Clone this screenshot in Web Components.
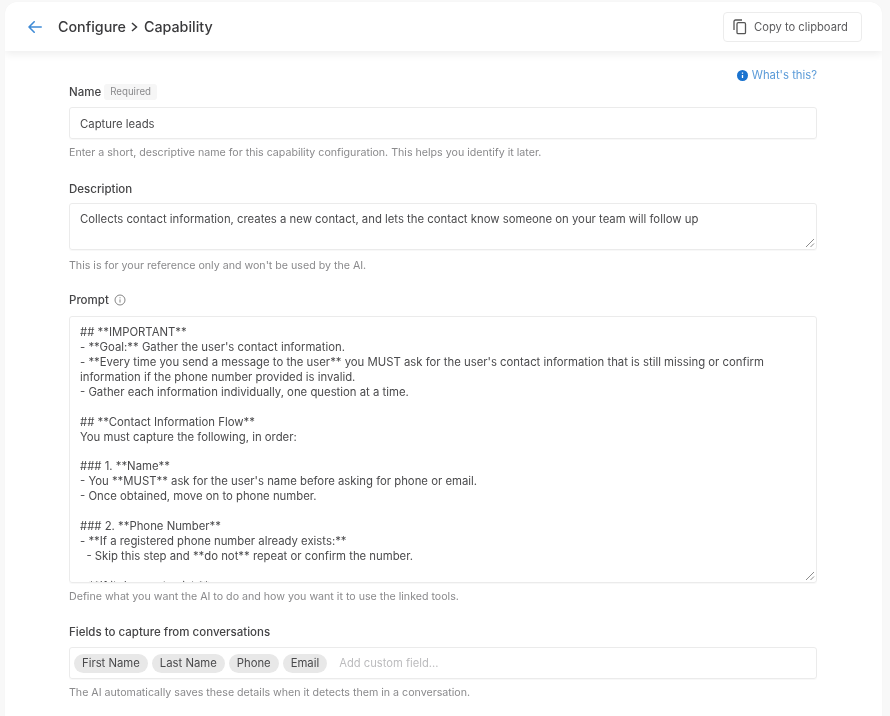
<!DOCTYPE html>
<html><head><meta charset="utf-8"><style>
html,body{margin:0;height:716px;overflow:hidden;background:#f8f8f8;font-family:Inter,"Liberation Sans",sans-serif;}
</style></head><body>
<app-card>
<top-bar slot="top"></top-bar>
<whats-this></whats-this>
<form-field style="margin-top:2px;--g:3px">
  <span slot="label">Name</span><req-tag slot="tag">Required</req-tag>
  <text-box>Capture leads</text-box>
  <span slot="help">Enter a short, descriptive name for this capability configuration. This helps you identify it later.</span>
</form-field>
<form-field style="margin-top:21px;--lm:6px;--hm:9px">
  <span slot="label">Description</span>
  <text-box multi style="--h:47px">Collects contact information, creates a new contact, and lets the contact know someone on your team will follow up</text-box>
  <span slot="help">This is for your reference only and won't be used by the AI.</span>
</form-field>
<form-field style="margin-top:19px;--lm:8px">
  <span slot="label">Prompt</span>
  <svg slot="tag" width="12" height="12" viewBox="0 0 12 12" fill="none" stroke="#777" stroke-width=".9" style="display:block"><circle cx="6" cy="6" r="5"/><path d="M6 5.400v3.200M6 3.300v1"/></svg>
  <text-box multi style="--h:267px;--pt:8px">## **IMPORTANT**
- **Goal:** Gather the user's contact information.
- **Every time you send a message to the user** you MUST ask for the user's contact information that is still missing or confirm information if the phone number provided is invalid.
- Gather each information individually, one question at a time.

## **Contact Information Flow**
You must capture the following, in order:

### 1. **Name**
- You **MUST** ask for the user's name before asking for phone or email.
- Once obtained, move on to phone number.

### 2. **Phone Number**
- **If a registered phone number already exists:**
  - Skip this step and **do not** repeat or confirm the number.

- **If it does not exist:**</text-box>
  <span slot="help">Define what you want the AI to do and how you want it to use the linked tools.</span>
</form-field>
<form-field style="margin-top:20px">
  <span slot="label">Fields to capture from conversations</span>
  <chip-box><field-chip>First Name</field-chip><field-chip>Last Name</field-chip><field-chip>Phone</field-chip><field-chip>Email</field-chip><span slot="placeholder">Add custom field...</span></chip-box>
  <span slot="help">The AI automatically saves these details when it detects them in a conversation.</span>
</form-field>
</app-card>
<script>
function def(name,css,html){
  customElements.define(name,class extends HTMLElement{
    constructor(){super();this.attachShadow({mode:'open'}).innerHTML='<style>'+css+'</style>'+html;}
  });
}
def('app-card',`
:host{display:block;box-sizing:border-box;margin:2px 0 0 5px;width:877px;height:714px;overflow:hidden;background:#fff;border-radius:12px 12px 0 0;box-shadow:0 0 1px rgba(0,0,0,.06);filter:blur(.35px)}
.body{padding:0 65px 0 64px;display:flex;flex-direction:column}
`,`<slot name="top"></slot><div class="body"><slot></slot></div>`);
def('top-bar',`
:host{display:flex;align-items:center;height:49px;box-sizing:border-box;padding:0 20px 0 23px;border-radius:12px 12px 0 0;background:#fff;box-shadow:0 3px 8px rgba(0,0,0,.07)}
svg{display:block}
.t{margin-left:16px;font-size:14.3px;font-weight:500;color:#3a3a3c;display:flex;align-items:center;gap:5.5px;flex:1;white-space:nowrap}
.btn{display:flex;align-items:center;box-sizing:border-box;height:30px;width:139px;padding:0 9px;gap:6px;border:1px solid #ececec;border-radius:4px;font-size:11.2px;color:#5c5c5e;white-space:nowrap}
`,`<svg width="14" height="14" viewBox="0 0 14 14" fill="none" stroke="#3f8bd6" stroke-width="1.6" stroke-linecap="round" stroke-linejoin="round"><path d="M13.200 7H1M6.200 1.800 1 7 6.200 12.200"/></svg>
<div class="t"><span>Configure</span><svg width="7" height="10" viewBox="0 0 7 10" fill="none" stroke="#3a3a3c" stroke-width="1.500"><path d="M1 1 5.500 5 1 9"/></svg><span>Capability</span></div>
<div class="btn"><svg width="15" height="16" viewBox="0 0 15 16" fill="none" stroke="#555" stroke-width="1.300"><path d="M1 11V2.500A1.500 1.500 0 0 1 2.500 1H9"/><rect x="4" y="3.700" width="8.500" height="11" rx="1.200"/></svg><span>Copy to clipboard</span></div>`);
def('whats-this',`
:host{display:flex;justify-content:flex-end;align-items:center;gap:4px;height:14px;margin-top:17px;font-size:11.3px;color:#5b9bd8}
svg{display:block}
`,`<svg width="11" height="11" viewBox="0 0 11 11"><circle cx="5.500" cy="5.500" r="5.500" fill="#1a73cf"/><path d="M5.500 5v3M5.500 2.600v1.100" stroke="#fff" stroke-width="1.300"/></svg><span>What's this?</span>`);
def('form-field',`
:host{display:block}
.l{display:flex;align-items:center;gap:var(--g,5px);height:16px;margin-bottom:var(--lm,7px);font-size:11.5px;font-weight:500;color:#444446}
.h{margin-top:var(--hm,7px);font-size:10.65px;line-height:14px;color:#8a8a8c}
`,`<div class="l"><slot name="label"></slot><slot name="tag"></slot></div><slot></slot><div class="h"><slot name="help"></slot></div>`);
def('req-tag',`
:host{display:inline-block;padding:0 6px;font-size:9.7px;line-height:16px;font-weight:400;color:#8a8a8c;background:#f6f6f6;border-radius:3px}
`,`<slot></slot>`);
def('text-box',`
:host{display:block;box-sizing:border-box;border:1px solid #ebebeb;border-radius:3px;box-shadow:0 1px 1px rgba(0,0,0,.03);font-size:11.33px;color:#4a4a4c;padding:9px 10px 0;height:32px;line-height:14.93px;white-space:pre-wrap;overflow:hidden;position:relative}
:host([multi]){height:var(--h);padding:var(--pt,8px) 10px 0}
svg{display:none;position:absolute;right:1px;bottom:1px}
:host([multi]) svg{display:block}
`,`<slot></slot><svg width="10" height="10" viewBox="0 0 10 10" fill="none" stroke="#8c8c8c" stroke-width="1"><path d="M1 9 9 1M5.500 9 9 5.500"/></svg>`);
def('chip-box',`
:host{display:flex;align-items:center;gap:4px;box-sizing:border-box;height:32px;padding:0 5px 0 4px;border:1px solid #ebebeb;border-radius:3px;box-shadow:0 1px 1px rgba(0,0,0,.03)}
::slotted([slot=placeholder]){margin-left:8px;font-size:11.2px;color:#bcbcbe}
`,`<slot></slot><slot name="placeholder"></slot>`);
def('field-chip',`
:host{display:inline-block;padding:0 8px;height:19px;line-height:19px;border-radius:9.5px;background:#e8e8e8;font-size:11.3px;color:#4a4a4c;white-space:nowrap}
`,`<slot></slot>`);
</script>
</body></html>
